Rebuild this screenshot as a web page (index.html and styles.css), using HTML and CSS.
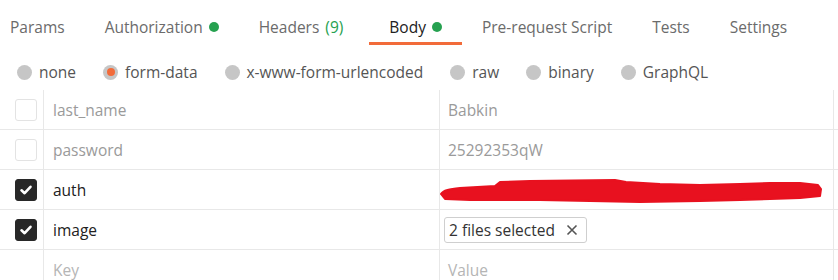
FILE: index.html
```html
<!DOCTYPE html>
<html lang="en">
<head>
    <meta charset="UTF-8">
    <title>Request Body</title>
    <link rel="stylesheet" href="styles.css">
</head>
<body>
    <div class="request">
        <nav class="tabs">
            <div class="tab">Params</div>
            <div class="tab">Authorization <span class="dot"></span></div>
            <div class="tab headers">Headers <span class="count">(9)</span></div>
            <div class="tab active">Body <span class="dot"></span></div>
            <div class="tab">Pre-request Script</div>
            <div class="tab">Tests</div>
            <div class="tab">Settings</div>
        </nav>

        <div class="body-modes">
            <label class="mode"><span class="radio"></span>none</label>
            <label class="mode"><span class="radio checked"></span>form-data</label>
            <label class="mode"><span class="radio"></span>x-www-form-urlencoded</label>
            <label class="mode"><span class="radio"></span>raw</label>
            <label class="mode"><span class="radio"></span>binary</label>
            <label class="mode"><span class="radio"></span>GraphQL</label>
        </div>

        <div class="params">
            <div class="row">
                <div class="cell check"><span class="box"></span></div>
                <div class="cell key muted">last_name</div>
                <div class="cell value muted">Babkin</div>
            </div>
            <div class="row">
                <div class="cell check"><span class="box"></span></div>
                <div class="cell key muted">password</div>
                <div class="cell value muted">25292353qW</div>
            </div>
            <div class="row">
                <div class="cell check">
                    <span class="box on">
                        <svg width="14" height="14" viewBox="0 0 14 14"><path d="M2.5 7.3 L5.6 10.2 L11.5 3.8" fill="none" stroke="#fff" stroke-width="2.6" stroke-linecap="round" stroke-linejoin="round"/></svg>
                    </span>
                </div>
                <div class="cell key">auth</div>
                <div class="cell value redacted">
                    <svg width="386" height="28" viewBox="0 0 386 28">
                        <path d="M1,17 C3,13 10,12 20,11 L55,9 L60,5 L90,4 L175,3 L186,5 L220,7 L260,8 L300,7 L330,6 L360,6 L378,8 L381,12 L380,19 L360,21 L330,22 L300,23 L260,24 L200,25 L150,24 L100,23 L60,23 L30,23 L5,22 Z" fill="#e8111f" stroke="#e8111f" stroke-width="2" stroke-linejoin="round"/>
                    </svg>
                </div>
            </div>
            <div class="row">
                <div class="cell check">
                    <span class="box on">
                        <svg width="14" height="14" viewBox="0 0 14 14"><path d="M2.5 7.3 L5.6 10.2 L11.5 3.8" fill="none" stroke="#fff" stroke-width="2.6" stroke-linecap="round" stroke-linejoin="round"/></svg>
                    </span>
                </div>
                <div class="cell key">image</div>
                <div class="cell value files">
                    <span class="chip">2 files selected
                        <svg width="12" height="12" viewBox="0 0 12 12"><path d="M1.5 1.5 L10.5 10.5 M10.5 1.5 L1.5 10.5" stroke="#555" stroke-width="1.6"/></svg>
                    </span>
                </div>
            </div>
            <div class="row">
                <div class="cell check"></div>
                <div class="cell key placeholder">Key</div>
                <div class="cell value placeholder">Value</div>
            </div>
        </div>
    </div>
</body>
</html>
```

FILE: styles.css
```css
:root {
    --accent: #f26b3a;
    --green: #26a150;
    --text: #212121;
    --text-light: #6b6b6b;
    --muted: #9a9a9a;
    --placeholder: #b5b5b5;
    --line: #e8e8e8;
}

* {
    margin: 0;
    padding: 0;
    box-sizing: border-box;
}

body {
    font-family: 'Open Sans', 'Noto Sans', sans-serif;
    font-size: 15.5px;
    color: var(--text);
    background: #ffffff;
}

.tabs {
    display: flex;
    height: 45px;
}

.tab {
    display: flex;
    align-items: center;
    gap: 6px;
    padding: 12px 20px 0;
    color: var(--text-light);
    border-bottom: 3px solid transparent;
}

.tab:first-child {
    padding-left: 10px;
}

.tab.headers {
    padding-right: 26px;
}

.tab.active {
    color: var(--text);
    border-bottom-color: var(--accent);
}

.dot {
    width: 10px;
    height: 10px;
    border-radius: 50%;
    background: var(--green);
}

.count {
    color: var(--green);
}

.body-modes {
    display: flex;
    align-items: center;
    height: 45px;
    padding: 9px 0 0 17px;
}

.mode {
    display: flex;
    align-items: center;
    gap: 7px;
    margin-right: 27px;
    color: #555555;
}

.radio {
    width: 15px;
    height: 15px;
    border-radius: 50%;
    background: #c6c6c6;
    display: flex;
    align-items: center;
    justify-content: center;
}

.radio.checked::after {
    content: '';
    width: 8px;
    height: 8px;
    border-radius: 50%;
    background: var(--accent);
}

.params {
    width: 838px;
}

.row {
    display: grid;
    grid-template-columns: 44px 396px 394px 4px;
    height: 40px;
    border-bottom: 1px solid var(--line);
}

.row:last-child {
    border-bottom: none;
}

.cell {
    display: flex;
    align-items: center;
    border-right: 1px solid var(--line);
}

.cell.check {
    padding-left: 15px;
}

.cell.key {
    padding-left: 9px;
}

.cell.value {
    padding-left: 8px;
}

.muted {
    color: var(--muted);
}

.placeholder {
    color: var(--placeholder);
}

.box {
    width: 22px;
    height: 22px;
    border: 1px solid #e3e3e3;
    border-radius: 3px;
    display: flex;
    align-items: center;
    justify-content: center;
}

.box.on {
    background: #282828;
    border-color: #282828;
}

.cell.redacted {
    padding-left: 0;
    padding-top: 2px;
}

.cell.files {
    padding-left: 4px;
}

.chip {
    display: flex;
    align-items: center;
    gap: 11px;
    height: 26px;
    padding: 0 8px 0 4px;
    border: 1px solid #cfcfcf;
    border-radius: 3px;
    color: #333333;
}
```
